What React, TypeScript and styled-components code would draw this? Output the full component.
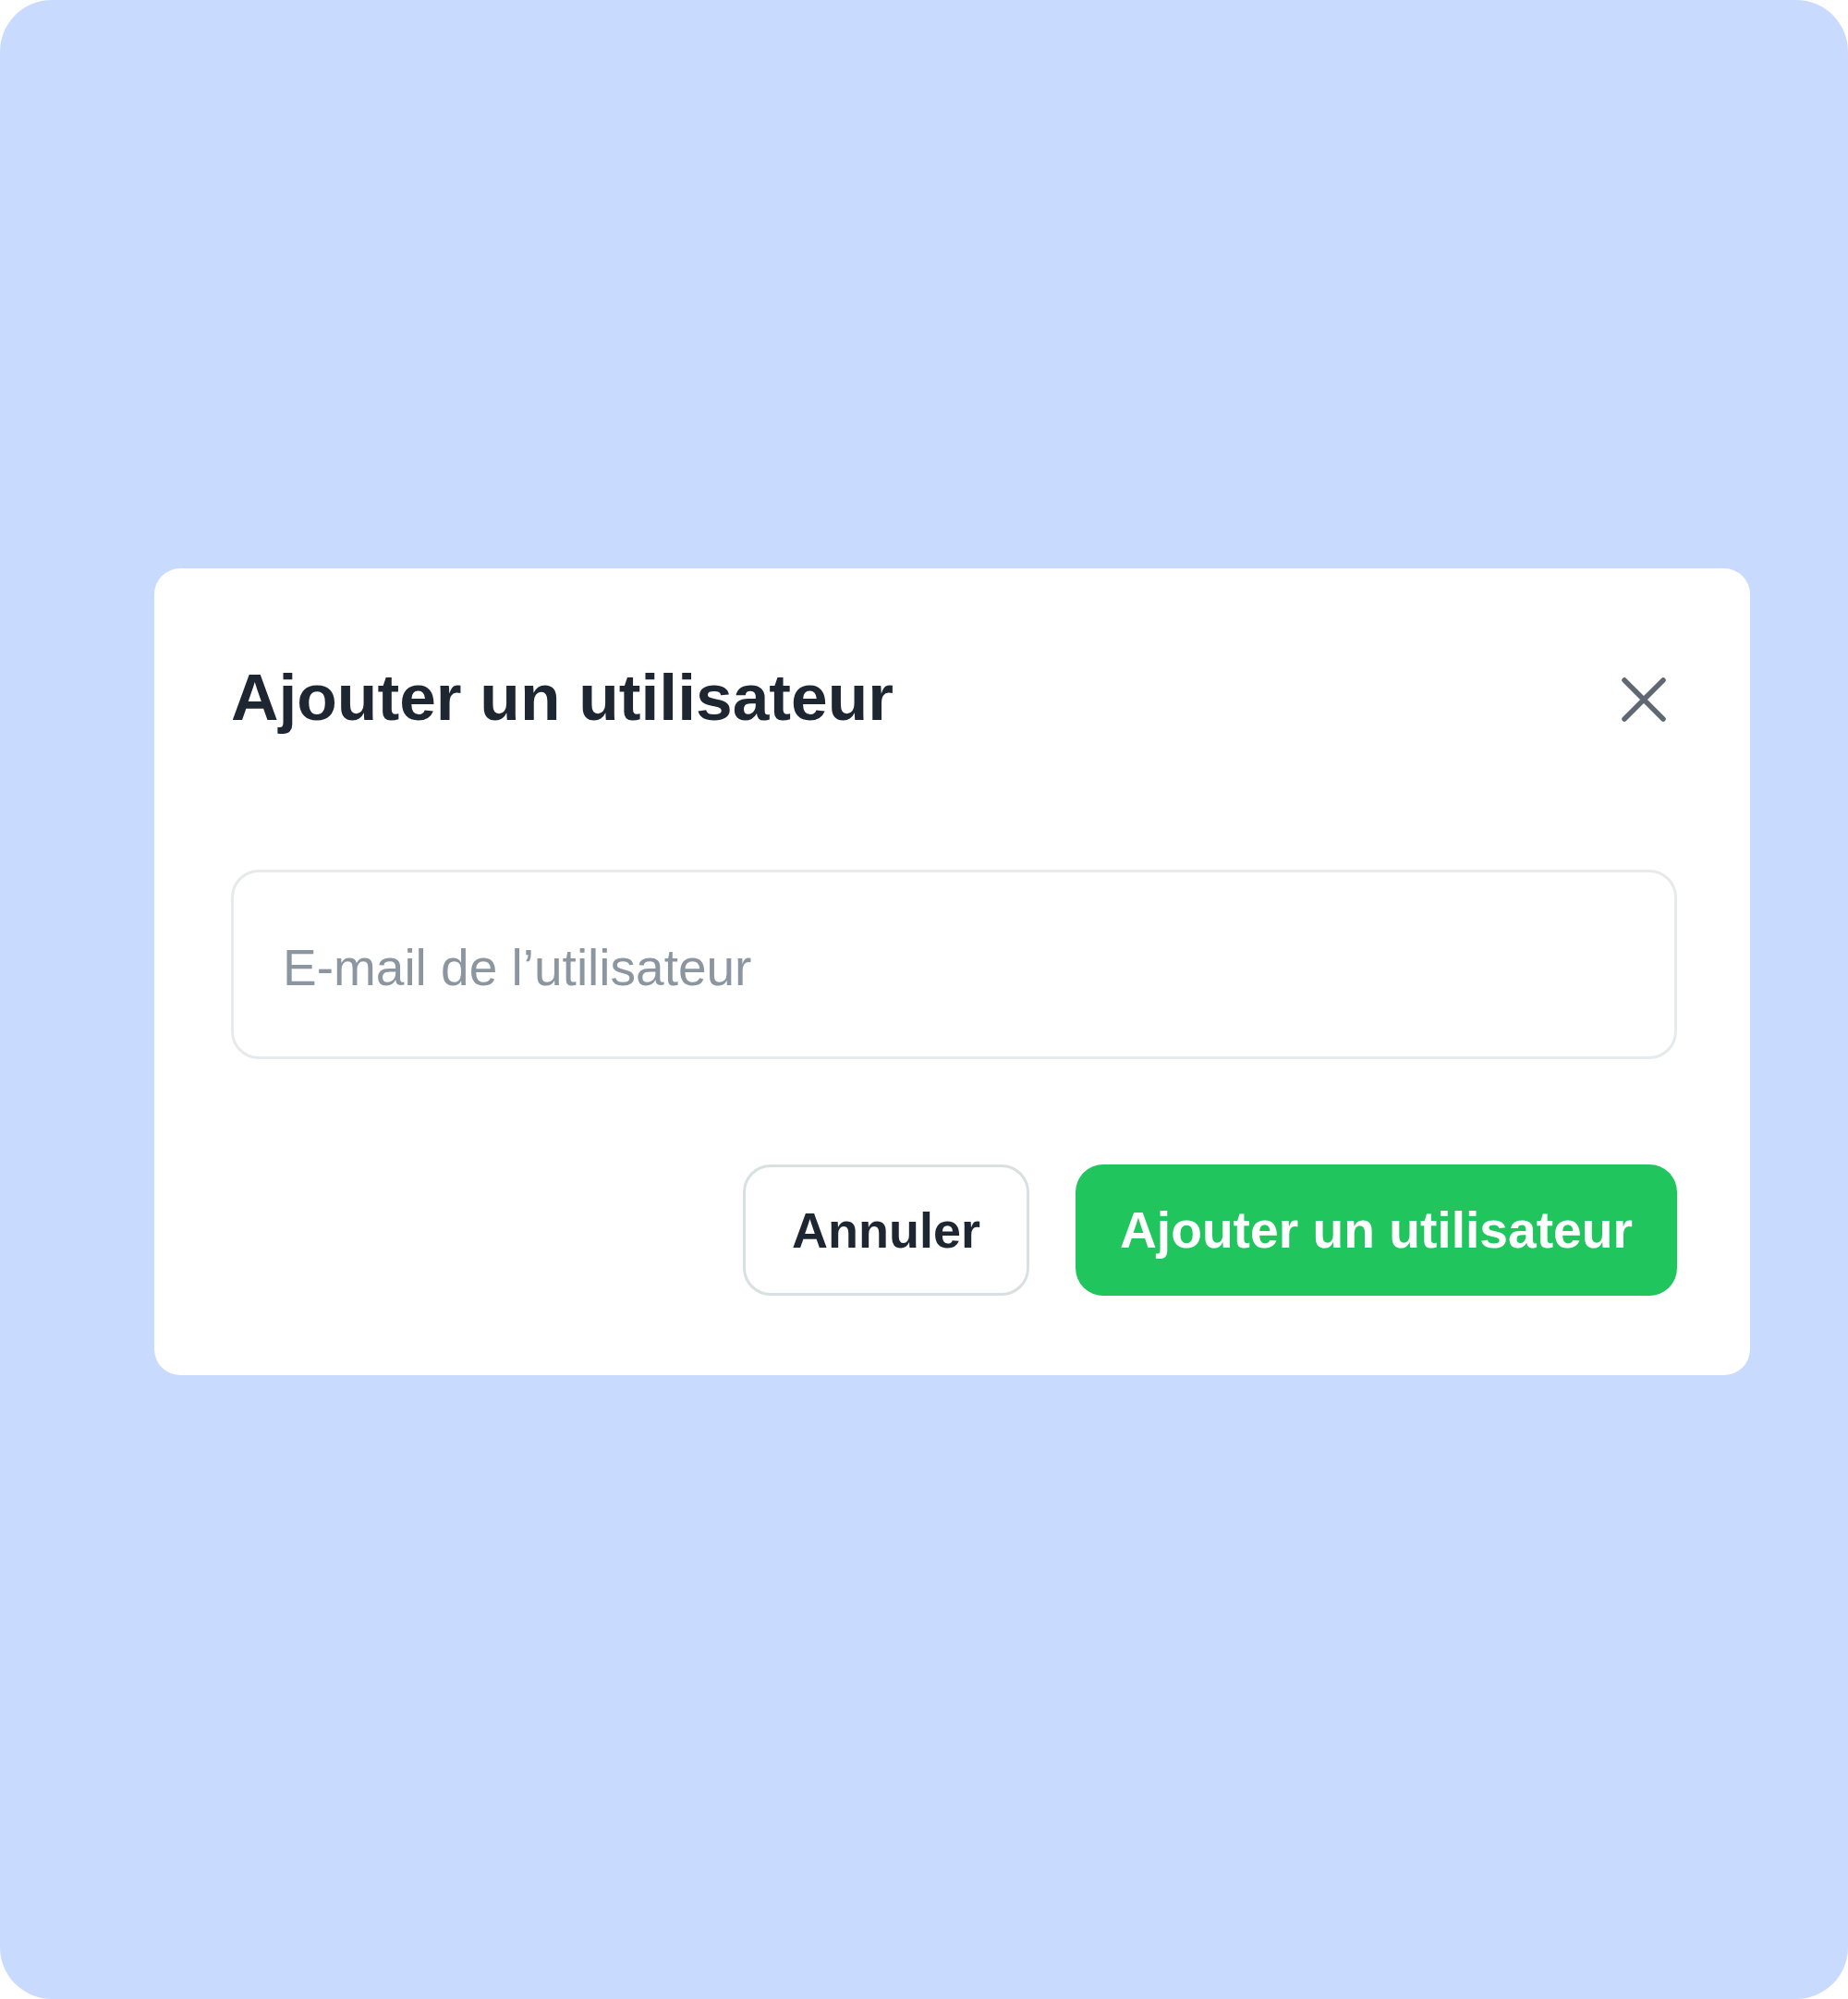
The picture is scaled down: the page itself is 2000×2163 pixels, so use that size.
import React from "react";
import styled, { createGlobalStyle } from "styled-components";

const Global = createGlobalStyle`
  html, body { margin: 0; padding: 0; background: #ffffff; }
  body { font-family: "Liberation Sans", Arial, sans-serif; }
`;

const Canvas = styled.div`
  width: 2000px;
  height: 2163px;
  box-sizing: border-box;
  background: #c9daff;
  border-radius: 56px;
  padding: 615px 0 0 167px;
`;

const Modal = styled.div`
  width: 1727px;
  height: 873px;
  box-sizing: border-box;
  background: #ffffff;
  border-radius: 28px;
  padding: 84px 79px 0 83px;
  display: flex;
  flex-direction: column;
`;

const Header = styled.div`
  height: 112px;
  display: flex;
  align-items: center;
  justify-content: space-between;
`;

const Title = styled.h2`
  margin: 0;
  font-family: "Liberation Sans", Arial, sans-serif;
  font-weight: 700;
  font-size: 71.3px;
  line-height: 1;
  color: #1e2632;
`;

const CloseButton = styled.button`
  width: 60px;
  height: 60px;
  margin: 4px 6px 0 0;
  padding: 0;
  border: none;
  background: transparent;
  display: flex;
  align-items: center;
  justify-content: center;
  cursor: pointer;
`;

const Input = styled.input`
  margin-top: 130px;
  height: 205px;
  width: 100%;
  box-sizing: border-box;
  border: 3px solid #e6eaed;
  border-radius: 30px;
  padding: 6px 0 0 53px;
  font-family: "Liberation Sans", Arial, sans-serif;
  font-size: 55px;
  color: #1e2632;
  outline: none;
  background: #ffffff;
  &::placeholder {
    color: #8c96a1;
  }
`;

const Actions = styled.div`
  margin-top: 114px;
  display: flex;
  justify-content: flex-end;
  gap: 50px;
`;

const Button = styled.button<{ $primary?: boolean }>`
  height: 142px;
  box-sizing: border-box;
  border-radius: 30px;
  font-family: "Liberation Sans", Arial, sans-serif;
  font-weight: 700;
  font-size: ${(p) => (p.$primary ? "55.2px" : "54px")};
  cursor: pointer;
  padding: ${(p) => (p.$primary ? "0 48px" : "0 50px")};
  border: ${(p) => (p.$primary ? "none" : "3px solid #d9e0e1")};
  background: ${(p) => (p.$primary ? "#21c55d" : "#ffffff")};
  color: ${(p) => (p.$primary ? "#ffffff" : "#1e2632")};
`;

export default function App() {
  return (
    <>
      <Global />
      <Canvas>
        <Modal>
          <Header>
            <Title>Ajouter un utilisateur</Title>
            <CloseButton aria-label="Fermer">
              <svg width="48" height="48" viewBox="0 0 48 48">
                <path
                  d="M3 3 L45 45 M45 3 L3 45"
                  stroke="#606874"
                  strokeWidth="5.5"
                  strokeLinecap="round"
                  fill="none"
                />
              </svg>
            </CloseButton>
          </Header>
          <Input placeholder="E-mail de l’utilisateur" />
          <Actions>
            <Button>Annuler</Button>
            <Button $primary>Ajouter un utilisateur</Button>
          </Actions>
        </Modal>
      </Canvas>
    </>
  );
}
